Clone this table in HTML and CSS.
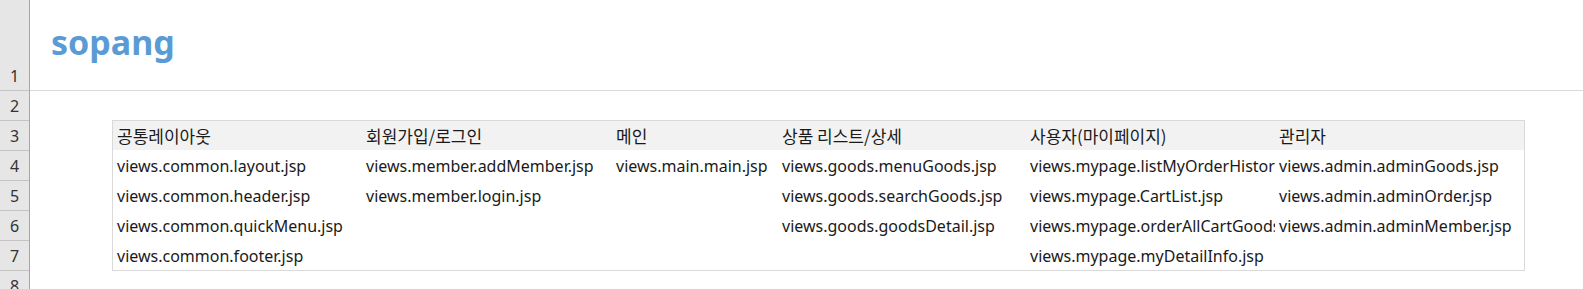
FILE: index.html
```html
<!DOCTYPE html>
<html>

<head>
    <link rel="stylesheet" href="styles.css">
</head>

<body>
    <div class="sheet">
        <div class="row-heads">
            <div class="rh rh-first">1</div>
            <div class="rh">2</div>
            <div class="rh">3</div>
            <div class="rh">4</div>
            <div class="rh">5</div>
            <div class="rh">6</div>
            <div class="rh">7</div>
            <div class="rh">8</div>
        </div>

        <div class="cells">
            <div class="title-row">
                <p class="title">sopang</p>
            </div>

            <div class="blank-row"></div>

            <div class="page-table">
                <div class="cell head">공통레이아웃</div>
                <div class="cell head">회원가입/로그인</div>
                <div class="cell head">메인</div>
                <div class="cell head">상품 리스트/상세</div>
                <div class="cell head">사용자(마이페이지)</div>
                <div class="cell head">관리자</div>

                <div class="cell">views.common.layout.jsp</div>
                <div class="cell">views.member.addMember.jsp</div>
                <div class="cell">views.main.main.jsp</div>
                <div class="cell">views.goods.menuGoods.jsp</div>
                <div class="cell">views.mypage.listMyOrderHistory.jsp</div>
                <div class="cell">views.admin.adminGoods.jsp</div>

                <div class="cell">views.common.header.jsp</div>
                <div class="cell">views.member.login.jsp</div>
                <div class="cell"></div>
                <div class="cell">views.goods.searchGoods.jsp</div>
                <div class="cell">views.mypage.CartList.jsp</div>
                <div class="cell">views.admin.adminOrder.jsp</div>

                <div class="cell">views.common.quickMenu.jsp</div>
                <div class="cell"></div>
                <div class="cell"></div>
                <div class="cell">views.goods.goodsDetail.jsp</div>
                <div class="cell">views.mypage.orderAllCartGoods.jsp</div>
                <div class="cell">views.admin.adminMember.jsp</div>

                <div class="cell">views.common.footer.jsp</div>
                <div class="cell"></div>
                <div class="cell"></div>
                <div class="cell"></div>
                <div class="cell">views.mypage.myDetailInfo.jsp</div>
                <div class="cell"></div>
            </div>
        </div>
    </div>
</body>

</html>
```

FILE: styles.css
```css
body {
    margin: 0;
    background-color: white;
    font-family: "Noto Sans", "Noto Sans CJK KR", sans-serif;
    color: #1a1a1a;
}

.sheet {
    display: flex;
    height: 289px;
    overflow: hidden;
}

/* row numbers down the left edge */
.row-heads {
    width: 29px;
    background-color: #e6e6e6;
    border-right: 1px solid #a6a6a6;
    flex-shrink: 0;
}

.rh {
    height: 29px;
    border-bottom: 1px solid #c4c4c4;
    display: flex;
    align-items: flex-end;
    justify-content: center;
    font-size: 16px;
    line-height: 28px;
    color: #333;
}

.rh-first {
    height: 90px;
}

.cells {
    flex: 1;
}

.title-row {
    height: 90px;
    border-bottom: 1px solid #d9d9d9;
    display: flex;
    align-items: center;
}

.title {
    margin: 0 0 6px 21px;
    font-size: 34px;
    font-weight: bold;
    color: #5b9bd5;
}

.blank-row {
    height: 29px;
}

.page-table {
    display: grid;
    grid-template-columns: 249px 250px 166px 248px 249px 249px;
    width: max-content;
    margin-left: 82px;
    border: 1px solid #d9d9d9;
}

.cell {
    height: 30px;
    line-height: 32px;
    padding-left: 4px;
    font-size: 16px;
    white-space: nowrap;
    overflow: hidden;
}

.head {
    background-color: #f2f2f2;
    height: 29px;
    line-height: 30px;
    font-family: "Noto Sans CJK KR", "Noto Sans", sans-serif;
    font-size: 17px;
}
```
